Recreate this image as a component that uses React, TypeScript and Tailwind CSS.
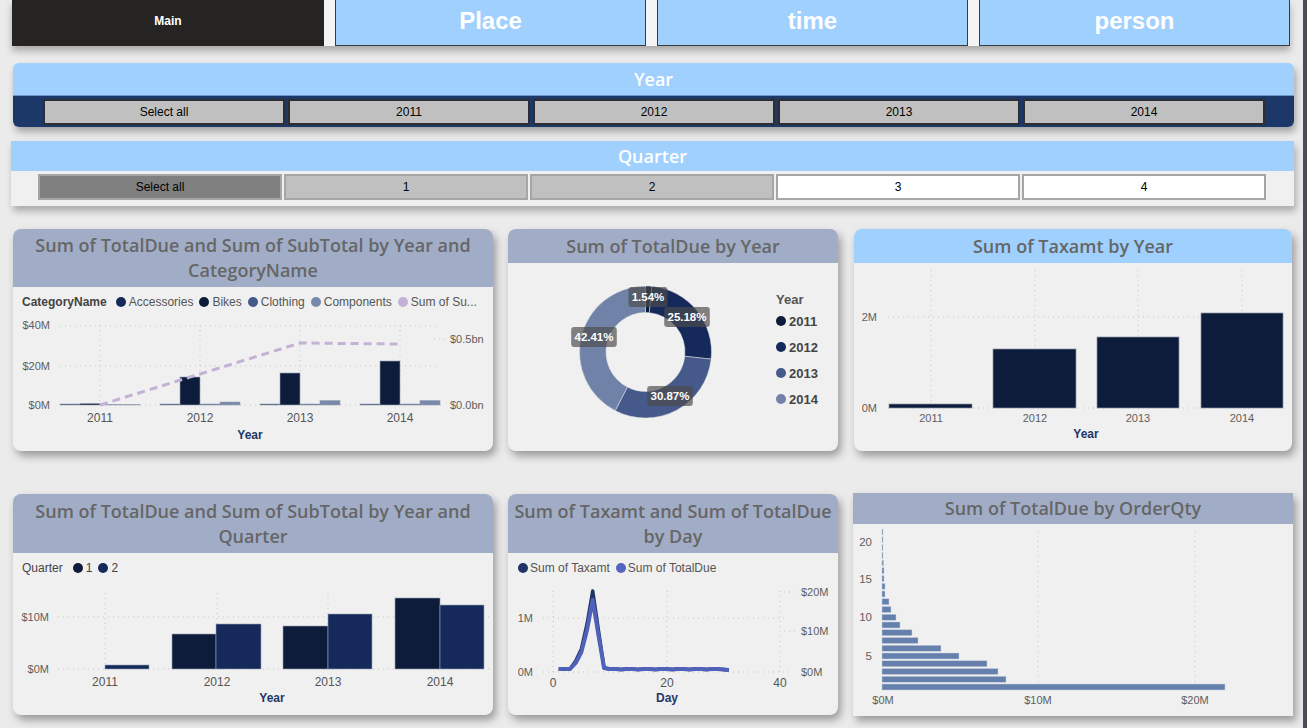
import React from "react";

const C_ACC = "#14295a";
const C_BIKE = "#0d1c3a";
const C_CLO = "#44598a";
const C_COMP = "#7888aa";
const C_LINE = "#c3b2d5";
const GRID = "#c4c4c4";
const AXIS = "#605e5c";

type Pt = [number, number];

function pts(list: Pt[]) {
  return list.map((p) => p.join(",")).join(" ");
}

function arcPath(cx: number, cy: number, r0: number, r1: number, a0: number, a1: number) {
  const p = (r: number, a: number) => [cx + r * Math.sin(2 * Math.PI * a), cy - r * Math.cos(2 * Math.PI * a)];
  const large = a1 - a0 > 0.5 ? 1 : 0;
  const [x0, y0] = p(r1, a0);
  const [x1, y1] = p(r1, a1);
  const [x2, y2] = p(r0, a1);
  const [x3, y3] = p(r0, a0);
  return `M${x0},${y0} A${r1},${r1} 0 ${large} 1 ${x1},${y1} L${x2},${y2} A${r0},${r0} 0 ${large} 0 ${x3},${y3} Z`;
}

function Dot({ color }: { color: string }) {
  return <span className="inline-block w-[10px] h-[10px] rounded-full shrink-0" style={{ background: color }} />;
}

function Card({
  title,
  header = "bg-[#a1adc6]",
  headerH,
  width,
  height,
  square,
  children,
}: {
  title: React.ReactNode;
  header?: string;
  headerH: string;
  width: string;
  height: string;
  square?: boolean;
  children: React.ReactNode;
}) {
  return (
    <div
      className={`${width} ${height} ${square ? "" : "rounded-[8px]"} bg-[#f0f0f0] shadow-[3px_5px_8px_rgba(0,0,0,0.35)] overflow-hidden flex flex-col shrink-0`}
    >
      <div
        className={`${header} ${headerH} flex items-center justify-center text-center font-['Open_Sans',sans-serif] font-semibold text-[18px] leading-[25px] text-[#666666] whitespace-nowrap shrink-0`}
      >
        <div>{title}</div>
      </div>
      {children}
    </div>
  );
}

function AxisText({ x, y, children, anchor = "middle", bold, fill = AXIS, size = 11 }: any) {
  return (
    <text x={x} y={y} textAnchor={anchor} dominantBaseline="central" fontSize={size} fill={fill} fontWeight={bold ? 700 : 400}>
      {children}
    </text>
  );
}

function HLine({ x1, x2, y }: { x1: number; x2: number; y: number }) {
  return <line x1={x1} x2={x2} y1={y} y2={y} stroke={GRID} strokeWidth={1} strokeDasharray="1 4" />;
}
function VLine({ x, y1, y2 }: { x: number; y1: number; y2: number }) {
  return <line x1={x} x2={x} y1={y1} y2={y2} stroke={GRID} strokeWidth={1} strokeDasharray="1 4" />;
}

function ChartCategory() {
  const tops = [
    [404, 403.5, 404.5, 404.5],
    [404, 377, 404, 402],
    [404, 373, 404, 400.5],
    [404, 361, 404, 400.5],
  ];
  const colors = [C_ACC, C_BIKE, C_CLO, C_COMP];
  const centers = [100, 200, 300, 400];
  return (
    <Card
      title={
        <>
          Sum of TotalDue and Sum of SubTotal by Year and
          <br />
          CategoryName
        </>
      }
      headerH="h-[58px]"
      width="w-[480px]"
      height="h-[222px]"
    >
      <div className="h-[30px] flex items-center pl-[9px] text-[12px] text-[#555] gap-[3px] whitespace-nowrap">
        <span className="font-bold text-[#444] mr-[6px]">CategoryName</span>
        <Dot color={C_ACC} />
        <span className="mr-[3px]">Accessories</span>
        <Dot color={C_BIKE} />
        <span className="mr-[3px]">Bikes</span>
        <Dot color={C_CLO} />
        <span className="mr-[3px]">Clothing</span>
        <Dot color={C_COMP} />
        <span className="mr-[3px]">Components</span>
        <Dot color={C_LINE} />
        <span>Sum of Su...</span>
      </div>
      <svg width={480} height={134} viewBox="13 317 480 134">
        <HLine x1={60} x2={440} y={326} />
        <HLine x1={60} x2={440} y={366} />
        <HLine x1={60} x2={445} y={405} />
        <HLine x1={434} x2={446} y={339} />
        {centers.map((c) => (
          <VLine key={c} x={c} y1={325} y2={405} />
        ))}
        {tops.map((g, gi) =>
          g.map((t, i) => (
            <rect
              key={`${gi}-${i}`}
              x={centers[gi] - 40 + i * 20}
              y={t}
              width={20}
              height={405 - t}
              fill={colors[i]}
              stroke="#9aa3b5"
              strokeWidth={0.6}
            />
          ))
        )}
        <polyline
          points={pts([
            [100, 405],
            [200, 374],
            [300, 343],
            [400, 344],
          ])}
          fill="none"
          stroke={C_LINE}
          strokeWidth={3}
          strokeDasharray="8 5"
        />
        <AxisText x={50} y={325} anchor="end">$40M</AxisText>
        <AxisText x={50} y={366} anchor="end">$20M</AxisText>
        <AxisText x={50} y={405} anchor="end">$0M</AxisText>
        <AxisText x={450} y={339} anchor="start">$0.5bn</AxisText>
        <AxisText x={450} y={405} anchor="start">$0.0bn</AxisText>
        {centers.map((c, i) => (
          <AxisText key={c} x={c} y={418} size={12} fill="#555">
            {2011 + i}
          </AxisText>
        ))}
        <AxisText x={250} y={435} size={12} bold fill="#1f3864">
          Year
        </AxisText>
      </svg>
    </Card>
  );
}

function ChartDonut() {
  const segs = [
    { v: 0.0154, c: C_BIKE },
    { v: 0.2518, c: "#15295a" },
    { v: 0.3087, c: "#45598a" },
    { v: 0.4241, c: "#7082a7" },
  ];
  let acc = 0;
  const labels = [
    { t: "1.54%", x: 648, y: 297 },
    { t: "25.18%", x: 687, y: 317 },
    { t: "42.41%", x: 594, y: 337 },
    { t: "30.87%", x: 670, y: 396 },
  ];
  const legend = ["2011", "2012", "2013", "2014"];
  return (
    <Card title="Sum of TotalDue by Year" headerH="h-[34px]" width="w-[330px]" height="h-[222px]">
      <svg width={330} height={188} viewBox="508 263 330 188">
        {segs.map((s, i) => {
          const a0 = acc;
          acc += s.v;
          return <path key={i} d={arcPath(645.5, 352, 39.5, 66, a0, acc)} fill={s.c} stroke="#e8e8e8" strokeWidth={0.5} />;
        })}
        {labels.map((l) => {
          const w = l.t.length * 6.6 + 6;
          return (
            <g key={l.t}>
              <rect x={l.x - w / 2} y={l.y - 10} width={w} height={20} rx={3} fill="rgba(75,75,75,0.68)" />
              <text x={l.x} y={l.y} textAnchor="middle" dominantBaseline="central" fontSize={11.5} fontWeight={700} fill="#fff">
                {l.t}
              </text>
            </g>
          );
        })}
        <AxisText x={776} y={299} anchor="start" size={13} bold fill="#555">
          Year
        </AxisText>
        {legend.map((y, i) => (
          <g key={y}>
            <circle cx={781} cy={321 + i * 26} r={5} fill={segs[i].c} />
            <AxisText x={789} y={321 + i * 26} anchor="start" size={13} bold fill="#444">
              {y}
            </AxisText>
          </g>
        ))}
      </svg>
    </Card>
  );
}

function ChartTax() {
  const bars = [
    { x0: 889, x1: 972, t: 404, c: 931, l: "2011" },
    { x0: 993, x1: 1076, t: 349, c: 1035, l: "2012" },
    { x0: 1097, x1: 1179, t: 337, c: 1138, l: "2013" },
    { x0: 1201, x1: 1283, t: 313, c: 1242, l: "2014" },
  ];
  return (
    <Card title="Sum of Taxamt by Year" header="bg-[#9fd0fe]" headerH="h-[34px]" width="w-[438px]" height="h-[222px]">
      <svg width={438} height={188} viewBox="854 263 438 188">
        <HLine x1={888} x2={1285} y={317} />
        <HLine x1={888} x2={1285} y={408} />
        {bars.map((b) => (
          <VLine key={b.c} x={b.c} y1={270} y2={408} />
        ))}
        {bars.map((b) => (
          <rect key={b.l} x={b.x0} y={b.t} width={b.x1 - b.x0} height={408 - b.t} fill={C_BIKE} stroke="#8d95a5" strokeWidth={0.7} />
        ))}
        <AxisText x={877} y={317} anchor="end">2M</AxisText>
        <AxisText x={877} y={408} anchor="end">0M</AxisText>
        {bars.map((b) => (
          <AxisText key={b.l} x={b.c} y={418}>
            {b.l}
          </AxisText>
        ))}
        <AxisText x={1086} y={434} size={12} bold fill="#1f3864">
          Year
        </AxisText>
      </svg>
    </Card>
  );
}

function ChartQuarter() {
  const bars = [
    { x0: 105, x1: 149, t: 665, c: "#15295a" },
    { x0: 172, x1: 216, t: 634, c: C_BIKE },
    { x0: 216, x1: 261, t: 624, c: "#15295a" },
    { x0: 283, x1: 328, t: 626, c: C_BIKE },
    { x0: 328, x1: 372, t: 614, c: "#15295a" },
    { x0: 395, x1: 440, t: 598, c: C_BIKE },
    { x0: 440, x1: 484, t: 605, c: "#15295a" },
  ];
  const xs = [105, 217, 328, 440];
  return (
    <Card
      title={
        <>
          Sum of TotalDue and Sum of SubTotal by Year and
          <br />
          Quarter
        </>
      }
      headerH="h-[59px]"
      width="w-[480px]"
      height="h-[221px]"
    >
      <div className="h-[27px] flex items-center pt-[2px] pl-[9px] text-[12px] text-[#444] gap-[3px] whitespace-nowrap">
        <span className="mr-[7px]">Quarter</span>
        <Dot color={C_BIKE} />
        <span className="mr-[3px]">1</span>
        <Dot color="#15295a" />
        <span>2</span>
      </div>
      <svg width={480} height={135} viewBox="13 580 480 135">
        <HLine x1={58} x2={490} y={617} />
        <HLine x1={58} x2={490} y={669} />
        {xs.map((x) => (
          <VLine key={x} x={x} y1={593} y2={669} />
        ))}
        {bars.map((b, i) => (
          <rect key={i} x={b.x0} y={b.t} width={b.x1 - b.x0} height={669 - b.t} fill={b.c} stroke="#9aa3b5" strokeWidth={0.6} />
        ))}
        <AxisText x={49} y={617} anchor="end">$10M</AxisText>
        <AxisText x={49} y={669} anchor="end">$0M</AxisText>
        {xs.map((x, i) => (
          <AxisText key={x} x={x} y={682} size={12} fill="#555">
            {2011 + i}
          </AxisText>
        ))}
        <AxisText x={272} y={698} size={12} bold fill="#1f3864">
          Year
        </AxisText>
      </svg>
    </Card>
  );
}

function ChartDay() {
  const dx = (d: number) => 553 + d * 5.675;
  const tax: number[] = [669, 669, 669, 661, 649, 624, 591, 630, 668];
  const due: number[] = [669, 669, 669, 663, 652, 630, 600, 635, 668];
  const tail = (base: number[]) => {
    const out: Pt[] = base.map((y, i) => [dx(i + 1), y]);
    for (let d = 10; d <= 31; d++) out.push([dx(d), d % 3 === 0 ? 669.5 : 669]);
    out[out.length - 1][1] = 670;
    return out;
  };
  return (
    <Card
      title={
        <>
          Sum of Taxamt and Sum of TotalDue
          <br />
          by Day
        </>
      }
      headerH="h-[59px]"
      width="w-[330px]"
      height="h-[221px]"
    >
      <div className="h-[27px] flex items-center pt-[2px] pl-[10px] text-[12px] text-[#555] gap-[2px] whitespace-nowrap">
        <Dot color="#1f3566" />
        <span className="mr-[4px]">Sum of Taxamt</span>
        <Dot color="#5566c0" />
        <span>Sum of TotalDue</span>
      </div>
      <svg width={330} height={135} viewBox="508 580 330 135">
        <HLine x1={543} x2={786} y={618} />
        <HLine x1={543} x2={792} y={672} />
        <HLine x1={784} x2={797} y={592} />
        <HLine x1={784} x2={797} y={631} />
        {[553, 667, 780].map((x) => (
          <VLine key={x} x={x} y1={591} y2={672} />
        ))}
        <polyline points={pts(tail(tax))} fill="none" stroke="#1f3566" strokeWidth={3.5} strokeLinejoin="round" />
        <polyline points={pts(tail(due))} fill="none" stroke="#4f61b8" strokeWidth={4} strokeLinejoin="round" />
        <AxisText x={533} y={618} anchor="end">1M</AxisText>
        <AxisText x={533} y={672} anchor="end">0M</AxisText>
        <AxisText x={801} y={592} anchor="start">$20M</AxisText>
        <AxisText x={801} y={631} anchor="start">$10M</AxisText>
        <AxisText x={801} y={672} anchor="start">$0M</AxisText>
        <AxisText x={553} y={683} size={12} fill="#555">0</AxisText>
        <AxisText x={667} y={683} size={12} fill="#555">20</AxisText>
        <AxisText x={780} y={683} size={12} fill="#555">40</AxisText>
        <AxisText x={667} y={698} size={12} bold fill="#1f3864">
          Day
        </AxisText>
      </svg>
    </Card>
  );
}

function ChartQty() {
  const widths = [343, 124, 116, 105, 77, 59, 36, 30, 18, 14, 9, 7, 3, 3, 2, 2, 1.5, 1, 1, 1, 1];
  const yq = (q: number) => 687 - (q - 1) * 7.75;
  return (
    <Card title="Sum of TotalDue by OrderQty" headerH="h-[31px]" width="w-[440px]" height="h-[223px]" square>
      <svg width={440} height={192} viewBox="853 524 440 192">
        <VLine x={1038} y1={531} y2={690} />
        <VLine x={1195} y1={531} y2={690} />
        {widths.map((w, i) => (
          <rect key={i} x={882} y={yq(i + 1) - 3} width={w} height={6} fill="#6580ad" stroke="#c8d0df" strokeWidth={0.5} />
        ))}
        {[5, 10, 15, 20].map((q) => (
          <AxisText key={q} x={872} y={q === 20 ? 542 : yq(q)} anchor="end" size={11.5}>
            {q}
          </AxisText>
        ))}
        <AxisText x={883} y={700}>$0M</AxisText>
        <AxisText x={1038} y={700}>$10M</AxisText>
        <AxisText x={1195} y={700}>$20M</AxisText>
      </svg>
    </Card>
  );
}

export default function App() {
  const years = ["Select all", "2011", "2012", "2013", "2014"];
  const quarters = [
    { t: "Select all", bg: "bg-[#808080]" },
    { t: "1", bg: "bg-[#c0c0c0]" },
    { t: "2", bg: "bg-[#c0c0c0]" },
    { t: "3", bg: "bg-white" },
    { t: "4", bg: "bg-white" },
  ];
  return (
    <div className="w-[1307px] h-[728px] overflow-hidden flex bg-[#ebebeb] font-['Liberation_Sans',Arial,sans-serif]">
      <div className="w-[1303px] h-full flex flex-col">
        {/* navigation */}
        <div className="ml-[12px] w-[1278px] h-[46px] flex gap-[11px] shadow-[0_5px_7px_rgba(0,0,0,0.28)] bg-[#f4f4f4] shrink-0">
          <div className="w-[312px] h-full bg-[#252423] flex items-center justify-center pb-[4px] text-white font-bold text-[12px]">
            Main
          </div>
          {["Place", "time", "person"].map((t) => (
            <div
              key={t}
              className="w-[311px] h-full bg-[#9fd0fe] border border-t-0 border-[#3a3a3a] flex items-center justify-center pb-[4px] text-white font-bold text-[24px]"
            >
              {t}
            </div>
          ))}
        </div>

        {/* year slicer */}
        <div className="ml-[13px] mt-[17px] w-[1281px] h-[64px] rounded-[6px] overflow-hidden flex flex-col shadow-[2px_5px_7px_rgba(0,0,0,0.3)] shrink-0">
          <div className="h-[33px] bg-[#9fd0fe] flex items-center justify-center text-white font-['Open_Sans',sans-serif] font-semibold text-[18px] border-b border-[#6f95c4]">
            Year
          </div>
          <div className="flex-1 bg-[#1b3869] flex items-center pl-[30px] gap-[3px]">
            {years.map((y) => (
              <div
                key={y}
                className="w-[242px] h-[26px] bg-[#c0c0c0] border-2 border-[#2d2d33] flex items-center justify-center text-[12px] text-black"
              >
                {y}
              </div>
            ))}
          </div>
        </div>

        {/* quarter slicer */}
        <div className="ml-[11px] mt-[14px] w-[1283px] h-[65px] flex flex-col bg-[#f0f0f0] shadow-[2px_5px_7px_rgba(0,0,0,0.28)] shrink-0">
          <div className="h-[30px] bg-[#9fd0fe] flex items-center justify-center text-white font-['Open_Sans',sans-serif] font-semibold text-[18px]">
            Quarter
          </div>
          <div className="flex-1 flex items-start pt-[3px] pl-[27px] gap-[2px]">
            {quarters.map((q) => (
              <div
                key={q.t}
                className={`w-[244px] h-[26px] ${q.bg} border-2 border-[#a6a6a6] flex items-center justify-center text-[12px] text-black`}
              >
                {q.t}
              </div>
            ))}
          </div>
        </div>

        {/* first row of visuals */}
        <div className="ml-[13px] mt-[23px] flex gap-[15px] shrink-0">
          <ChartCategory />
          <ChartDonut />
          <div className="ml-px">
            <ChartTax />
          </div>
        </div>

        {/* second row of visuals */}
        <div className="ml-[13px] mt-[43px] flex items-start gap-[15px] shrink-0">
          <ChartQuarter />
          <ChartDay />
          <div className="-mt-px">
            <ChartQty />
          </div>
        </div>
      </div>
      <div className="w-[4px] h-full bg-[#4b4a55]" />
    </div>
  );
}
